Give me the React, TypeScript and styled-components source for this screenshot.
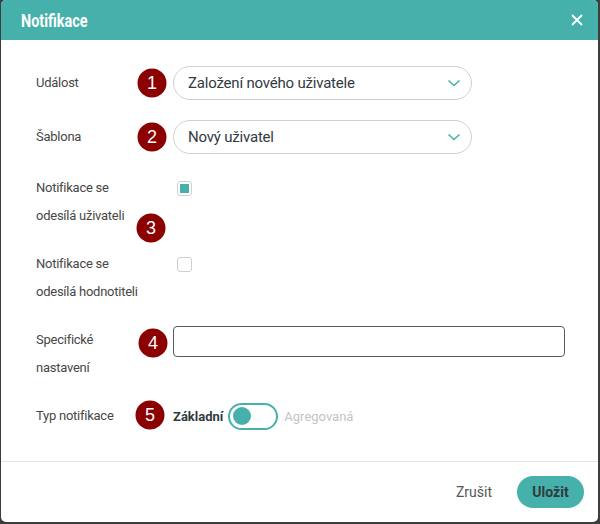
import React from "react";
import styled, { createGlobalStyle } from "styled-components";

const TEAL = "#46b1ab";

const GlobalStyle = createGlobalStyle`
  html, body { margin: 0; padding: 0; }
  body {
    background: #3d3d3d;
    font-family: Roboto, "Liberation Sans", sans-serif;
    width: 600px;
    height: 524px;
    overflow: hidden;
  }
`;

const Dialog = styled.div`
  margin-left: 1px;
  width: 597px;
  height: 522px;
  background: #fff;
  border-radius: 5px;
  overflow: hidden;
  display: flex;
  flex-direction: column;
`;

const Header = styled.div`
  height: 40px;
  flex: none;
  background: ${TEAL};
  display: flex;
  align-items: center;
  justify-content: space-between;
  padding: 0 14px 0 20px;
`;

const Title = styled.h1`
  margin: 0;
  color: #fff;
  font-size: 19px;
  font-weight: 700;
  transform: scaleX(0.76);
  transform-origin: left center;
`;

const CloseButton = styled.button`
  border: 0;
  background: none;
  padding: 0;
  width: 14px;
  height: 14px;
  display: flex;
  cursor: pointer;
`;

const Body = styled.div`
  flex: 1;
  padding: 26px 34px 0 35px;
  display: flex;
  flex-direction: column;
  gap: 20px;
`;

const Row = styled.div<{ $align?: string }>`
  position: relative;
  display: grid;
  grid-template-columns: 137px 1fr;
  align-items: ${(p) => p.$align || "start"};
`;

const Label = styled.div<{ $center?: boolean }>`
  font-size: 13px;
  line-height: 28px;
  letter-spacing: -0.25px;
  color: #474747;
  align-self: ${(p) => (p.$center ? "center" : "start")};
`;

const Select = styled.div`
  width: 299px;
  height: 34px;
  box-sizing: border-box;
  border: 1px solid #d0d0d0;
  border-radius: 17px;
  display: flex;
  align-items: center;
  justify-content: space-between;
  padding: 0 10px 0 14px;
  font-size: 15px;
  letter-spacing: -0.2px;
  color: #333a40;
`;

const CheckBox = styled.span<{ $checked?: boolean }>`
  margin: 7px 0 0 4px;
  width: 15px;
  height: 15px;
  box-sizing: border-box;
  border: 1px solid #cfcfcf;
  border-radius: 3px;
  display: flex;
  align-items: center;
  justify-content: center;
  &::after {
    content: "";
    display: ${(p) => (p.$checked ? "block" : "none")};
    width: 9px;
    height: 9px;
    background: ${TEAL};
  }
`;

const TextInput = styled.input`
  width: 392px;
  height: 31px;
  box-sizing: border-box;
  border: 1px solid #555b60;
  border-radius: 4px;
  outline: none;
  padding: 0 8px;
  font-family: inherit;
  font-size: 14px;
`;

const ToggleGroup = styled.div`
  display: flex;
  align-items: center;
  height: 28px;
`;

const ToggleLabel = styled.span<{ $active?: boolean }>`
  font-size: 13px;
  font-weight: ${(p) => (p.$active ? 700 : 400)};
  color: ${(p) => (p.$active ? "#333a40" : "#c4c4c4")};
`;

const Toggle = styled.span`
  margin: 0 6px 0 5px;
  width: 50px;
  height: 27px;
  box-sizing: border-box;
  border: 2px solid ${TEAL};
  border-radius: 14px;
  display: flex;
  align-items: center;
  padding-left: 3px;
  &::before {
    content: "";
    width: 18px;
    height: 18px;
    border-radius: 50%;
    background: ${TEAL};
  }
`;

const Badge = styled.span<{ $x: number; $y: number }>`
  position: absolute;
  left: ${(p) => p.$x}px;
  top: ${(p) => p.$y}px;
  transform: translate(-50%, -50%);
  width: 29px;
  height: 29px;
  border-radius: 50%;
  background: #8b0000;
  color: #fff;
  font-family: "Liberation Sans", Arial, sans-serif;
  font-size: 18px;
  display: flex;
  align-items: center;
  justify-content: center;
`;

const Footer = styled.div`
  height: 61px;
  flex: none;
  box-sizing: border-box;
  border-top: 1px solid #e4e4e4;
  display: flex;
  align-items: center;
  justify-content: flex-end;
  gap: 25px;
  padding: 0 14px 0 0;
`;

const TextButton = styled.button`
  border: 0;
  background: none;
  padding: 0;
  font-family: inherit;
  font-size: 14px;
  color: #555;
`;

const PrimaryButton = styled.button`
  border: 0;
  background: ${TEAL};
  width: 67px;
  height: 32px;
  border-radius: 16px;
  font-family: inherit;
  font-size: 14px;
  font-weight: 700;
  color: #2e3b40;
`;

const Chevron = () => (
  <svg width="14" height="8" viewBox="0 0 14 8">
    <polyline points="1.5,1.5 7,6.5 12.5,1.5" fill="none" stroke={TEAL} strokeWidth="1.6" />
  </svg>
);

export default function App() {
  return (
    <>
      <GlobalStyle />
      <Dialog>
        <Header>
          <Title>Notifikace</Title>
          <CloseButton aria-label="Zavřít">
            <svg width="14" height="14" viewBox="0 0 14 14">
              <path d="M2 2 L12 12 M12 2 L2 12" stroke="#fff" strokeWidth="1.8" />
            </svg>
          </CloseButton>
        </Header>
        <Body>
          <Row $align="center">
            <Label $center>Událost</Label>
            <Select>
              <span>Založení nového uživatele</span>
              <Chevron />
            </Select>
            <Badge $x={116} $y={17}>1</Badge>
          </Row>
          <Row $align="center">
            <Label $center>Šablona</Label>
            <Select>
              <span>Nový uživatel</span>
              <Chevron />
            </Select>
            <Badge $x={116} $y={17}>2</Badge>
          </Row>
          <Row>
            <Label>
              Notifikace se
              <br />
              odesílá uživateli
            </Label>
            <CheckBox $checked />
            <Badge $x={115} $y={54}>3</Badge>
          </Row>
          <Row>
            <Label>
              Notifikace se
              <br />
              odesílá hodnotiteli
            </Label>
            <CheckBox />
          </Row>
          <Row>
            <Label>
              Specifické
              <br />
              nastavení
            </Label>
            <TextInput />
            <Badge $x={117} $y={17}>4</Badge>
          </Row>
          <Row $align="center">
            <Label $center>Typ notifikace</Label>
            <ToggleGroup>
              <ToggleLabel $active>Základní</ToggleLabel>
              <Toggle />
              <ToggleLabel>Agregovaná</ToggleLabel>
            </ToggleGroup>
            <Badge $x={114} $y={13}>5</Badge>
          </Row>
        </Body>
        <Footer>
          <TextButton>Zrušit</TextButton>
          <PrimaryButton>Uložit</PrimaryButton>
        </Footer>
      </Dialog>
    </>
  );
}
